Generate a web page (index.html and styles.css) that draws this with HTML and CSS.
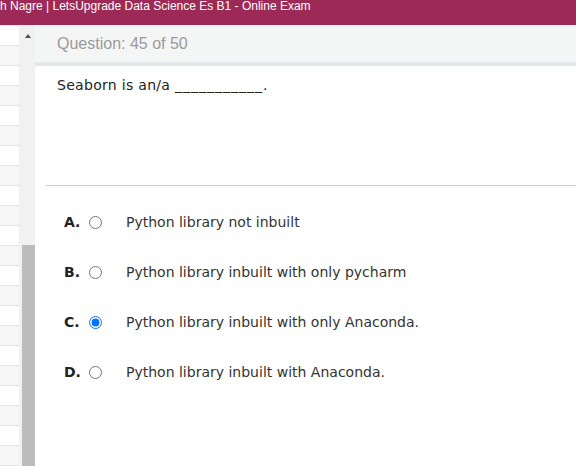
FILE: index.html
```html
<!DOCTYPE html>
<html>
<head>
<meta charset="utf-8">
<link rel="stylesheet" href="styles.css">
</head>
<body>
<div class="topbar">h Nagre | LetsUpgrade Data Science Es B1 - Online Exam</div>
<div class="layout">
  <div class="side">
    <ul class="qlist">
      <li></li><li></li><li></li><li></li><li></li><li></li><li></li><li></li><li></li><li></li><li></li><li></li><li></li><li></li><li></li><li></li><li></li><li></li><li></li><li></li><li></li><li></li>
    </ul>
    <div class="scroll">
      <div class="arrow"></div>
      <div class="thumb"></div>
    </div>
  </div>
  <div class="main">
    <div class="qhead">Question: 45 of 50</div>
    <div class="qbody">
      <div class="qtext">Seaborn is an/a <span class="blank">___________</span>.</div>
      <div class="options">
        <label class="opt"><span class="letter">A.</span><input type="radio" name="q45"><span class="otext">Python library not inbuilt</span></label>
        <label class="opt"><span class="letter">B.</span><input type="radio" name="q45"><span class="otext">Python library inbuilt with only pycharm</span></label>
        <label class="opt"><span class="letter">C.</span><input type="radio" name="q45" checked><span class="otext">Python library inbuilt with only Anaconda.</span></label>
        <label class="opt"><span class="letter">D.</span><input type="radio" name="q45"><span class="otext">Python library inbuilt with Anaconda.</span></label>
      </div>
    </div>
  </div>
</div>
</body>
</html>
```
FILE: styles.css
```css
html, body {
  margin: 0;
  padding: 0;
  background: #fff;
  overflow: hidden;
}
body {
  width: 576px;
  height: 466px;
  font-family: "DejaVu Sans", Verdana, sans-serif;
}
.topbar {
  height: 25px;
  background: #9d2a56;
  color: #fff;
  font-family: "Liberation Sans", Arial, sans-serif;
  font-size: 12px;
  line-height: 13px;
  box-sizing: border-box;
  white-space: nowrap;
}
.layout {
  display: flex;
  height: 441px;
}
.side {
  display: flex;
  width: 35px;
  flex: none;
}
.qlist {
  list-style: none;
  margin: 0;
  padding: 1px 0 0 0;
  width: 20px;
  overflow: hidden;
  background: #f0f0f0;
}
.qlist li {
  height: 19px;
  width: 19px;
  border-bottom: 1px solid #e4e4e4;
  background: #fff;
}
.qlist li:nth-child(even) {
  background: #f6f6f6;
}
.scroll {
  width: 15px;
  background: #f1f1f1;
  display: flex;
  flex-direction: column;
  align-items: center;
}
.arrow {
  margin-top: 9px;
  width: 0;
  height: 0;
  border-left: 3.5px solid transparent;
  border-right: 3.5px solid transparent;
  border-bottom: 4px solid #505050;
}
.thumb {
  margin-top: auto;
  width: 13px;
  margin-left: 1px;
  height: 221px;
  background: #bcbcbc;
}
.main {
  flex: 1;
  display: flex;
  flex-direction: column;
}
.qhead {
  height: 37px;
  background: #f4f5f5;
  border-bottom: 4px solid #e3e7e9;
  color: #9a9a9a;
  font-family: "Liberation Sans", Arial, sans-serif;
  font-size: 16px;
  line-height: 37px;
  padding-left: 22px;
}
.qbody {
  padding-left: 11px;
}
.qtext {
  padding: 11px 0 0 11px;
  height: 108px;
  border-bottom: 1px solid #cccccc;
  font-size: 14px;
  line-height: 17px;
  letter-spacing: 0.3px;
  color: #222;
}
.blank {
  letter-spacing: 1px;
}
.options {
  padding-top: 11px;
  display: flex;
  flex-direction: column;
}
.opt {
  height: 50px;
  display: flex;
  align-items: center;
  padding-left: 18px;
  font-size: 14px;
  color: #333;
}
.letter {
  width: 25px;
  font-weight: bold;
  color: #222;
}
.opt input {
  margin: 0;
  width: 13px;
  height: 13px;
}
.otext {
  margin-left: 24px;
}
```
